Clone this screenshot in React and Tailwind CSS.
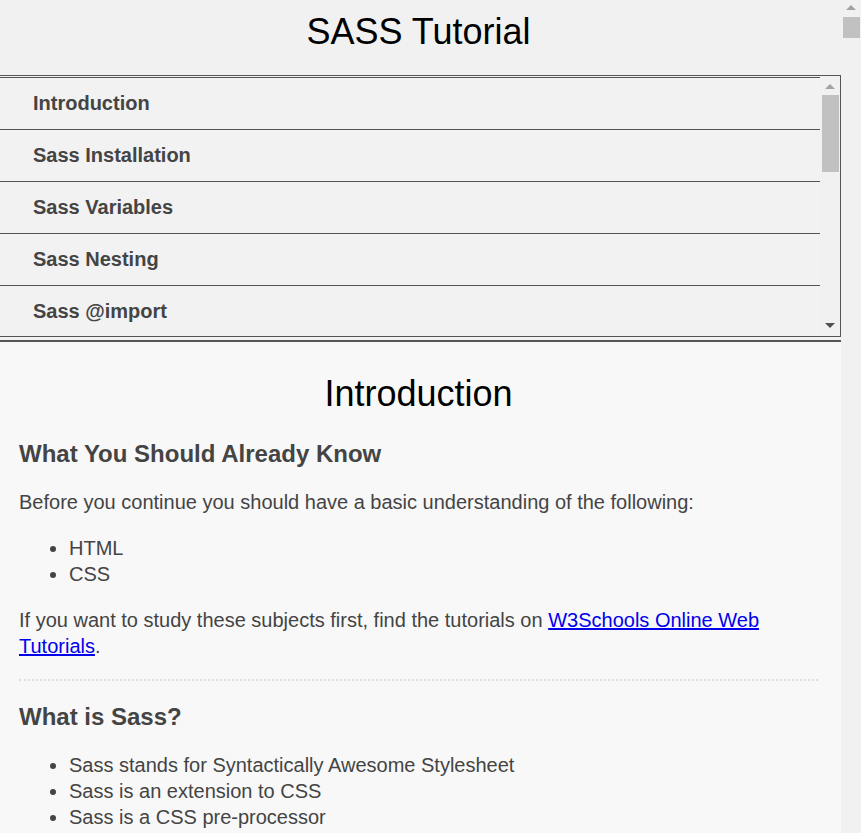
import React from "react";

const navItems = [
  "Introduction",
  "Sass Installation",
  "Sass Variables",
  "Sass Nesting",
  "Sass @import",
];

const ArrowUp = ({ color }) => (
  <svg width="10" height="5" viewBox="0 0 10 5">
    <path d="M0 5 L5 0 L10 5 Z" fill={color} />
  </svg>
);

const ArrowDown = ({ color }) => (
  <svg width="10" height="5" viewBox="0 0 10 5">
    <path d="M0 0 L10 0 L5 5 Z" fill={color} />
  </svg>
);

const App = () => {
  return (
    <div
      className="flex h-[833px] w-[861px] overflow-hidden bg-[#f1f1f1]"
      style={{ fontFamily: '"Liberation Sans", Arial, sans-serif' }}
    >
      <div className="w-[841px] shrink-0">
        {/* header */}
        <div className="border-b-2 border-[#555] bg-[#f1f1f1] pb-[3px]">
          <h1 className="pl-[19px] pr-[23px] pt-[11px] text-center text-[36px] leading-[41px] font-normal text-black">
            SASS Tutorial
          </h1>
          <div className="mt-[23px] flex h-[262px] border-y border-r border-[#555]">
            <div className="flex-1 overflow-hidden pt-px">
              <ul className="border-t border-[#555]">
                {navItems.map((item) => (
                  <li
                    key={item}
                    className="border-b border-[#555] bg-[#f2f2f2] py-[14px] pl-[33px] text-[20px] leading-[23px] font-bold text-[#444]"
                  >
                    {item}
                  </li>
                ))}
              </ul>
            </div>
            <div className="flex w-[20px] flex-col items-center bg-[#f1f1f1] pt-[8px] pb-[8px]">
              <ArrowUp color="#a3a3a3" />
              <div className="mt-[6px] h-[77px] w-[17px] bg-[#c1c1c1]" />
              <div className="flex-1" />
              <ArrowDown color="#505050" />
            </div>
          </div>
        </div>

        {/* content */}
        <div className="h-full bg-[#f8f8f8] pl-[19px] pr-[23px] text-[#444]">
          <h1 className="pt-[31px] text-center text-[36px] leading-[41px] font-normal text-black">
            Introduction
          </h1>
          <h2 className="mt-[26px] text-[24px] leading-[28px] font-bold">
            What You Should Already Know
          </h2>
          <p className="mt-[21px] text-[20px] leading-[26px]">
            Before you continue you should have a basic understanding of the following:
          </p>
          <ul className="mt-[20px] list-disc pl-[50px] text-[20px] leading-[26px]">
            <li>HTML</li>
            <li>CSS</li>
          </ul>
          <p className="mt-[20px] text-[20px] leading-[26px]">
            If you want to study these subjects first, find the tutorials on{" "}
            <a href="#" className="text-[#0000ee] underline">
              W3Schools Online Web Tutorials
            </a>
            .
          </p>
          <hr className="mt-[20px] border-0 border-t-2 border-dotted border-[#ddd]" />
          <h2 className="mt-[22px] text-[24px] leading-[28px] font-bold">What is Sass?</h2>
          <ul className="mt-[21px] list-disc pl-[50px] text-[20px] leading-[26px]">
            <li>Sass stands for Syntactically Awesome Stylesheet</li>
            <li>Sass is an extension to CSS</li>
            <li>Sass is a CSS pre-processor</li>
          </ul>
        </div>
      </div>

      {/* page scrollbar */}
      <div className="flex w-[20px] flex-col items-center bg-[#f1f1f1] pt-[5px]">
        <ArrowUp color="#a3a3a3" />
        <div className="mt-[7px] h-[21px] w-[17px] bg-[#c1c1c1]" />
      </div>
    </div>
  );
};

export default App;
